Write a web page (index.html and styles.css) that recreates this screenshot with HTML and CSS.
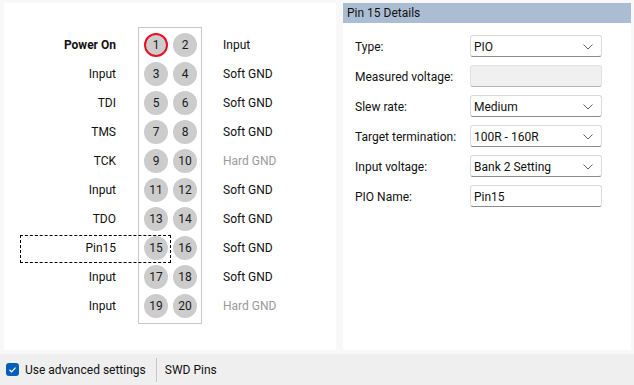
FILE: index.html
```html
<!DOCTYPE html>
<html>
<head>
<meta charset="utf-8">
<link rel="stylesheet" href="styles.css">
</head>
<body>
<div class="main">
  <div class="left">
    <div class="board">
      <div class="col-left">
        <div class="row bold">Power On</div>
        <div class="row">Input</div>
        <div class="row">TDI</div>
        <div class="row">TMS</div>
        <div class="row">TCK</div>
        <div class="row">Input</div>
        <div class="row">TDO</div>
        <div class="row">Pin15</div>
        <div class="row">Input</div>
        <div class="row">Input</div>
      </div>
      <div class="box">
        <div class="prow"><span class="pin active">1</span><span class="pin">2</span></div>
        <div class="prow"><span class="pin">3</span><span class="pin">4</span></div>
        <div class="prow"><span class="pin">5</span><span class="pin">6</span></div>
        <div class="prow"><span class="pin">7</span><span class="pin">8</span></div>
        <div class="prow"><span class="pin">9</span><span class="pin">10</span></div>
        <div class="prow"><span class="pin">11</span><span class="pin">12</span></div>
        <div class="prow"><span class="pin">13</span><span class="pin">14</span></div>
        <div class="prow"><span class="pin">15</span><span class="pin">16</span></div>
        <div class="prow"><span class="pin">17</span><span class="pin">18</span></div>
        <div class="prow"><span class="pin">19</span><span class="pin">20</span></div>
      </div>
      <div class="col-right">
        <div class="row">Input</div>
        <div class="row">Soft GND</div>
        <div class="row">Soft GND</div>
        <div class="row">Soft GND</div>
        <div class="row muted">Hard GND</div>
        <div class="row">Soft GND</div>
        <div class="row">Soft GND</div>
        <div class="row">Soft GND</div>
        <div class="row">Soft GND</div>
        <div class="row muted">Hard GND</div>
      </div>
    </div>
    <div class="focus"></div>
  </div>
  <div class="right">
    <div class="header">Pin 15 Details</div>
    <div class="form">
      <div class="frow">
        <span class="flabel">Type:</span>
        <div class="field combo"><span>PIO</span><svg class="chev" width="10" height="6" viewBox="0 0 10 6"><polyline points="0.5,0.5 5,5 9.5,0.5" fill="none" stroke="#606060" stroke-width="1"/></svg></div>
      </div>
      <div class="frow">
        <span class="flabel">Measured voltage:</span>
        <div class="field disabled"></div>
      </div>
      <div class="frow">
        <span class="flabel">Slew rate:</span>
        <div class="field combo"><span>Medium</span><svg class="chev" width="10" height="6" viewBox="0 0 10 6"><polyline points="0.5,0.5 5,5 9.5,0.5" fill="none" stroke="#606060" stroke-width="1"/></svg></div>
      </div>
      <div class="frow">
        <span class="flabel">Target termination:</span>
        <div class="field combo"><span>100R - 160R</span><svg class="chev" width="10" height="6" viewBox="0 0 10 6"><polyline points="0.5,0.5 5,5 9.5,0.5" fill="none" stroke="#606060" stroke-width="1"/></svg></div>
      </div>
      <div class="frow">
        <span class="flabel">Input voltage:</span>
        <div class="field combo"><span>Bank 2 Setting</span><svg class="chev" width="10" height="6" viewBox="0 0 10 6"><polyline points="0.5,0.5 5,5 9.5,0.5" fill="none" stroke="#606060" stroke-width="1"/></svg></div>
      </div>
      <div class="frow">
        <span class="flabel">PIO Name:</span>
        <div class="field"><span>Pin15</span></div>
      </div>
    </div>
  </div>
</div>
<div class="bar">
  <span class="check"><svg width="13" height="13" viewBox="0 0 13 13"><polyline points="3.5,6.8 5.6,8.8 9.5,4.6" fill="none" stroke="#fff" stroke-width="1.2"/></svg></span>
  <span class="bar-text">Use advanced settings</span>
  <span class="sep"></span>
  <span class="bar-text">SWD Pins</span>
</div>
</body>
</html>
```

FILE: styles.css
```css
* { box-sizing: border-box; }
html, body {
  margin: 0;
  padding: 0;
}
body {
  width: 634px;
  height: 385px;
  background: #f8f8f8;
  font-family: Roboto, "Noto Sans", sans-serif;
  font-size: 12px;
  color: #111;
  overflow: hidden;
}
.main {
  display: flex;
  gap: 7px;
  padding: 3px 3px 0 4px;
  height: 350px;
}
.left {
  position: relative;
  width: 332px;
  background: #fff;
}
.board {
  display: flex;
  align-items: flex-start;
  margin-top: 24px;
}
.col-left {
  width: 112px;
  padding-top: 4px;
  text-align: right;
}
.col-right {
  margin-left: 21px;
  padding-top: 4px;
}
.row {
  height: 29px;
  line-height: 29px;
  white-space: nowrap;
}
.bold { font-weight: bold; }
.muted { color: #9a9a9a; }
.box {
  margin-left: 22px;
  width: 64px;
  border: 1px solid #c8c8c8;
  padding: 2px 4px 3px 5px;
}
.prow {
  height: 29px;
  display: flex;
  align-items: center;
  gap: 5px;
}
.pin {
  width: 24px;
  height: 24px;
  border-radius: 50%;
  background: #cccccc;
  display: flex;
  align-items: center;
  justify-content: center;
  font-size: 12px;
  padding-top: 1px;
  color: #1a1a1a;
}
.pin.active {
  border: 2px solid #e81123;
}
.focus {
  position: absolute;
  left: 16px;
  top: 232px;
  width: 151px;
  height: 28px;
  border: 1px dashed #000;
}
.right {
  width: 288px;
  background: #fff;
}
.header {
  height: 20px;
  line-height: 21px;
  padding-left: 4px;
  background: #abbdd2;
  color: #111;
}
.form {
  padding: 12px 0 0 12px;
  display: flex;
  flex-direction: column;
  gap: 8px;
}
.frow {
  display: flex;
  align-items: center;
  height: 22px;
}
.flabel {
  width: 115px;
  white-space: nowrap;
  padding-top: 1px;
}
.field {
  width: 132px;
  height: 22px;
  border: 1px solid #dadada;
  border-bottom-color: #8c8c8c;
  border-radius: 3px;
  display: flex;
  align-items: center;
  justify-content: space-between;
  padding: 1px 8px 0 3px;
  background: #fff;
}
.field.disabled {
  background: #f0f0f0;
  border-color: #e2e2e2;
  border-bottom-color: #b4b4b4;
}
.chev { display: block; }
.bar {
  margin-top: 4px;
  height: 31px;
  background: #efefef;
  display: flex;
  align-items: center;
  padding-left: 6px;
}
.bar-text { padding-top: 1px; }
.check {
  width: 13px;
  height: 13px;
  border-radius: 3px;
  background: #005fb8;
  margin-right: 6px;
  display: flex;
}
.check svg { display: block; }
.sep {
  width: 1px;
  height: 24px;
  background: #c8c8c8;
  margin: 0 8px 0 10px;
}
```
